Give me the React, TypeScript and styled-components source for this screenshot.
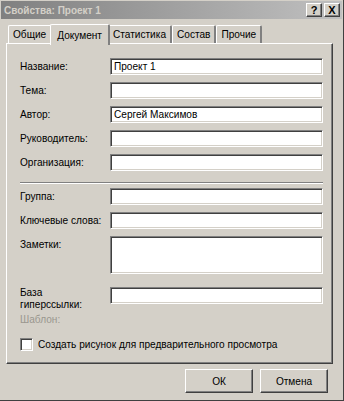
import React from "react";
import styled, { createGlobalStyle } from "styled-components";

const GlobalStyle = createGlobalStyle`
  html, body {
    margin: 0;
    padding: 0;
    background: #d4d0c8;
  }
  body {
    font-family: "Liberation Sans", Arial, sans-serif;
    font-size: 10.1px;
    color: #000;
  }
`;

const Window = styled.div`
  width: 344px;
  height: 401px;
  box-sizing: border-box;
  background: #d4d0c8;
  border-right: 1px solid #404040;
  border-bottom: 1px solid #404040;
  display: flex;
  flex-direction: column;
  overflow: hidden;
`;

const TitleBar = styled.div`
  height: 18px;
  margin: 1px 1px 0 1px;
  display: flex;
  align-items: center;
  justify-content: space-between;
  padding: 0 2px 0 3px;
  background: linear-gradient(to right, #808080, #c0c0c0);
`;

const TitleText = styled.span`
  color: #d4d0c8;
  font-weight: bold;
  font-size: 10px;
`;

const TitleButtons = styled.div`
  display: flex;
  gap: 2px;
`;

const TitleButton = styled.div`
  width: 16px;
  height: 14px;
  box-sizing: border-box;
  background: #d4d0c8;
  border-top: 1px solid #fff;
  border-left: 1px solid #fff;
  border-right: 1px solid #404040;
  border-bottom: 1px solid #404040;
  box-shadow: inset -1px -1px 0 #808080;
  display: flex;
  align-items: center;
  justify-content: center;
  font-weight: bold;
  font-size: 11px;
  line-height: 1;
`;

const Body = styled.div`
  padding: 4px 10px 0 6px;
  display: flex;
  flex-direction: column;
`;

const TabStrip = styled.div`
  display: flex;
  align-items: flex-end;
  height: 20px;
  padding-left: 2px;
  position: relative;
  z-index: 1;
`;

const Tab = styled.div<{ $active?: boolean }>`
  box-sizing: border-box;
  height: ${(p) => (p.$active ? "21px" : "18px")};
  padding: 0 ${(p) => (p.$active ? "6px" : "4px")};
  margin: 0 ${(p) => (p.$active ? "-2px" : "0")};
  background: #d4d0c8;
  border-top: 1px solid #fff;
  border-left: 1px solid #fff;
  border-right: 2px solid #808080;
  border-radius: 2px 2px 0 0;
  display: flex;
  align-items: center;
  margin-bottom: ${(p) => (p.$active ? "-2px" : "0")};
  position: relative;
  z-index: ${(p) => (p.$active ? 2 : 1)};
  white-space: nowrap;
`;

const Panel = styled.div`
  box-sizing: border-box;
  width: 327px;
  height: 321px;
  border-top: 1px solid #fff;
  border-left: 1px solid #fff;
  border-right: 1px solid #404040;
  border-bottom: 1px solid #404040;
  box-shadow: inset -1px -1px 0 #808080;
  padding: 14px 9px 0 13px;
  display: flex;
  flex-direction: column;
`;

const FieldRow = styled.div<{ $height?: number; $gap?: number }>`
  display: grid;
  grid-template-columns: 90px 213px;
  align-items: start;
  height: ${(p) => p.$height ?? 17}px;
  margin-bottom: ${(p) => p.$gap ?? 7}px;
`;

const Label = styled.label<{ $tight?: boolean }>`
  padding-top: ${(p) => (p.$tight ? 0 : 3)}px;
  line-height: 12px;
  white-space: nowrap;
`;

const Input = styled.div<{ $height?: number }>`
  box-sizing: border-box;
  height: ${(p) => p.$height ?? 17}px;
  background: #fff;
  border-top: 1px solid #808080;
  border-left: 1px solid #808080;
  border-right: 1px solid #fff;
  border-bottom: 1px solid #fff;
  box-shadow: inset 1px 1px 0 #404040, inset -1px -1px 0 #d4d0c8;
  padding: 2px 3px;
  line-height: 12px;
  white-space: nowrap;
  overflow: hidden;
`;

const Separator = styled.div`
  height: 0;
  border-top: 1px solid #808080;
  border-bottom: 1px solid #fff;
  width: 303px;
  margin: 4px 0 4px;
`;

const TemplateLine = styled.div`
  color: #9a978f;
  height: 12px;
  margin: 3px 0 12px;
`;

const CheckRow = styled.label`
  display: flex;
  align-items: center;
  gap: 5px;
`;

const CheckBox = styled.span`
  box-sizing: border-box;
  width: 13px;
  height: 13px;
  background: #fff;
  border-top: 1px solid #808080;
  border-left: 1px solid #808080;
  border-right: 1px solid #fff;
  border-bottom: 1px solid #fff;
  box-shadow: inset 1px 1px 0 #404040, inset -1px -1px 0 #d4d0c8;
`;

const ButtonRow = styled.div`
  display: flex;
  justify-content: flex-end;
  gap: 7px;
  padding: 5px 5px 0 0;
`;

const Button = styled.div`
  box-sizing: border-box;
  width: 68px;
  height: 24px;
  background: #d4d0c8;
  border-top: 1px solid #fff;
  border-left: 1px solid #fff;
  border-right: 1px solid #404040;
  border-bottom: 1px solid #404040;
  box-shadow: inset -1px -1px 0 #808080;
  display: flex;
  align-items: center;
  justify-content: center;
`;

const tabs = ["Общие", "Документ", "Статистика", "Состав", "Прочие"];

export default function App() {
  return (
    <>
      <GlobalStyle />
      <Window>
        <TitleBar>
          <TitleText>Свойства: Проект 1</TitleText>
          <TitleButtons>
            <TitleButton>?</TitleButton>
            <TitleButton>X</TitleButton>
          </TitleButtons>
        </TitleBar>
        <Body>
          <TabStrip>
            {tabs.map((t) => (
              <Tab key={t} $active={t === "Документ"}>
                {t}
              </Tab>
            ))}
          </TabStrip>
          <Panel>
            <FieldRow>
              <Label>Название:</Label>
              <Input>Проект 1</Input>
            </FieldRow>
            <FieldRow>
              <Label>Тема:</Label>
              <Input />
            </FieldRow>
            <FieldRow>
              <Label>Автор:</Label>
              <Input>Сергей Максимов</Input>
            </FieldRow>
            <FieldRow>
              <Label>Руководитель:</Label>
              <Input />
            </FieldRow>
            <FieldRow>
              <Label>Организация:</Label>
              <Input />
            </FieldRow>
            <Separator />
            <FieldRow>
              <Label>Группа:</Label>
              <Input />
            </FieldRow>
            <FieldRow>
              <Label>Ключевые слова:</Label>
              <Input />
            </FieldRow>
            <FieldRow $height={38} $gap={13}>
              <Label>Заметки:</Label>
              <Input $height={38} />
            </FieldRow>
            <FieldRow $height={24} $gap={0}>
              <Label $tight>
                База
                <br />
                гиперссылки:
              </Label>
              <Input />
            </FieldRow>
            <TemplateLine>Шаблон:</TemplateLine>
            <CheckRow>
              <CheckBox />
              Создать рисунок для предварительного просмотра
            </CheckRow>
          </Panel>
          <ButtonRow>
            <Button>ОК</Button>
            <Button>Отмена</Button>
          </ButtonRow>
        </Body>
      </Window>
    </>
  );
}
